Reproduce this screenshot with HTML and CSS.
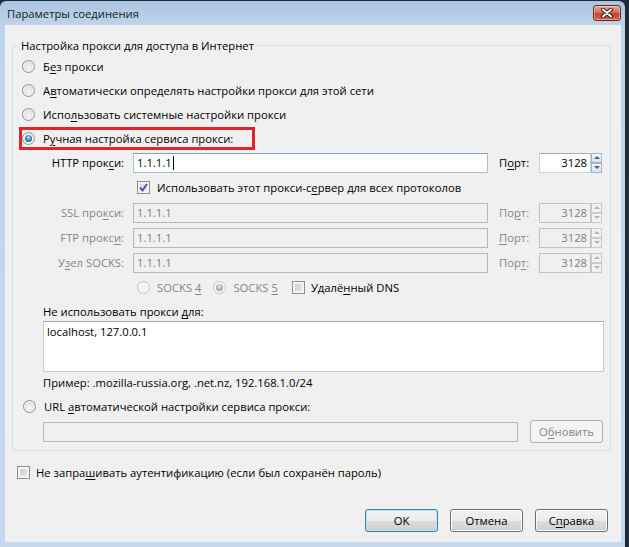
FILE: index.html
```html
<!DOCTYPE html>
<html>
<head>
  <title>Параметры соединения</title>
  <link rel="stylesheet" href="styles.css">
</head>
<body>
  <div class="window">
    <div class="titlebar">
      <span class="title">Параметры соединения</span>
      <span class="close">
        <svg width="14" height="10" viewBox="0 0 14 10">
          <path d="M3 1.5 L11 8.5 M11 1.5 L3 8.5" stroke="#3b1c16" stroke-width="4" stroke-linecap="round"/>
          <path d="M3 1.5 L11 8.5 M11 1.5 L3 8.5" stroke="#ffffff" stroke-width="2" stroke-linecap="round"/>
        </svg>
      </span>
    </div>

    <div class="client">
      <fieldset class="group">
        <legend>Настройка прокси для доступа в Интернет</legend>

        <div class="row"><span class="radio"></span><span>Б<u>е</u>з прокси</span></div>
        <div class="row"><span class="radio"></span><span>А<u>в</u>томатически определять настройки прокси для этой сети</span></div>
        <div class="row"><span class="radio"></span><span>Испо<u>л</u>ьзовать системные настройки прокси</span></div>
        <div class="row">
          <span class="highlight"><span class="radio checked"></span><span>Р<u>у</u>чная настройка сервиса прокси:</span></span>
        </div>

        <div class="proxy-grid">
          <label class="lbl">HTTP прок<u>с</u>и:</label>
          <div class="field"><span>1.1.1.1</span><span class="caret"></span></div>
          <label class="lbl-port">П<u>о</u>рт:</label>
          <div class="port">
            <div class="port-val">3128</div>
            <div class="spin"><span class="up"></span><span class="down"></span></div>
          </div>

          <div class="check-row">
            <span class="check checked">
              <svg width="9" height="9" viewBox="0 0 9 9"><path d="M1 4.5 L3.5 7.5 L8 1" fill="none" stroke="#3a55a0" stroke-width="1.8"/></svg>
            </span>
            <span>Использовать этот прокси-с<u>е</u>рвер для всех протоколов</span>
          </div>

          <label class="lbl off">SSL про<u>к</u>си:</label>
          <div class="field off">1.1.1.1</div>
          <label class="lbl-port off">По<u>р</u>т:</label>
          <div class="port off">
            <div class="port-val">3128</div>
            <div class="spin"><span class="up"></span><span class="down"></span></div>
          </div>

          <label class="lbl off">FTP прокс<u>и</u>:</label>
          <div class="field off">1.1.1.1</div>
          <label class="lbl-port off"><u>П</u>орт:</label>
          <div class="port off">
            <div class="port-val">3128</div>
            <div class="spin"><span class="up"></span><span class="down"></span></div>
          </div>

          <label class="lbl off">У<u>з</u>ел SOCKS:</label>
          <div class="field off">1.1.1.1</div>
          <label class="lbl-port off">Пор<u>т</u>:</label>
          <div class="port off">
            <div class="port-val">3128</div>
            <div class="spin"><span class="up"></span><span class="down"></span></div>
          </div>
        </div>

        <div class="socks-row">
          <span class="radio off"></span><span class="off socks4">SOCKS <u>4</u></span>
          <span class="radio off checked"></span><span class="off socks5">SOCKS <u>5</u></span>
          <span class="check"></span><span>Удалё<u>н</u>ный DNS</span>
        </div>

        <div class="label-row">Не использовать прокси <u>д</u>ля:</div>
        <div class="textarea">localhost, 127.0.0.1</div>
        <div class="hint">Пример: .mozilla-russia.org, .net.nz, 192.168.1.0/24</div>

        <div class="row url-radio"><span class="radio"></span><span>URL <u>а</u>втоматической настройки сервиса прокси:</span></div>
        <div class="url-row">
          <div class="field off url-field"></div>
          <div class="btn off">О<u>б</u>новить</div>
        </div>
      </fieldset>

      <div class="auth-row">
        <span class="check"></span>
        <span>Не запра<u>ш</u>ивать аутентификацию (если был сохранён пароль)</span>
      </div>

      <div class="buttons">
        <div class="btn default">OK</div>
        <div class="btn">Отмена</div>
        <div class="btn">С<u>п</u>равка</div>
      </div>
    </div>
  </div>
</body>
</html>
```

FILE: styles.css
```css
* {
  box-sizing: border-box;
}
body {
  margin: 0;
  width: 629px;
  height: 547px;
  overflow: hidden;
  background-color: #1c2a3a;
  font-family: "Open Sans", "Segoe UI", sans-serif;
  font-size: 11.25px;
  color: #000;
}
u {
  text-decoration-thickness: 1px;
  text-underline-offset: 2px;
}
.window {
  width: 625px;
  height: 546px;
  margin-top: 1px;
  display: flex;
  flex-direction: column;
  padding: 0 4px 5px 5px;
  border-radius: 6px 6px 0 0;
  background: linear-gradient(to bottom, #a9c3e1 0, #bfd4eb 24px, #c6d9ee 100%);
}
.titlebar {
  height: 24px;
  display: flex;
  justify-content: space-between;
  align-items: flex-start;
  padding: 4px 0 0 2px;
}
.title {
  line-height: 17px;
  font-size: 11.25px;
  color: #1b1b1b;
}
.close {
  width: 28px;
  height: 16px;
  display: flex;
  align-items: center;
  justify-content: center;
  border: 1px solid #6e2a20;
  border-radius: 3px;
  background: linear-gradient(to bottom, #e8a898 0, #d5715e 45%, #c5412b 55%, #cf6a4c 100%);
  box-shadow: inset 0 0 0 1px rgba(255,255,255,0.35);
}
.client {
  flex: 1;
  display: flex;
  flex-direction: column;
  background-color: #f0f0f0;
  padding: 12px 10px 10px 7px;
}

/* group box */
.group {
  margin: 0;
  width: 599px;
  border: 1px solid #d5dfe5;
  border-radius: 3px;
  padding: 0 6px 6px 9px;
}
.group legend {
  padding: 0 2px;
  margin-left: -3px;
  line-height: 17px;
}
.row {
  height: 24px;
  display: flex;
  align-items: center;
}
.highlight {
  display: flex;
  align-items: center;
  width: 236px;
  height: 23px;
  margin-left: -3px;
  border: 3px solid #e0232d;
}

/* radio and check */
.radio {
  flex: none;
  position: relative;
  width: 13px;
  height: 13px;
  margin-right: 8px;
  border-radius: 50%;
  border: 1px solid #8e8f8f;
  background: radial-gradient(circle at 50% 65%, #f6f6f6 0, #e3e3e3 55%, #cdcdcd 100%);
  box-shadow: inset 0 0 0 1px #f7f7f7;
}
.radio.checked::after {
  content: "";
  position: absolute;
  left: 2px;
  top: 2px;
  width: 7px;
  height: 7px;
  border-radius: 50%;
  background: radial-gradient(circle at 50% 35%, #b4dffc 0, #3b7fbb 55%, #17466f 100%);
}
.radio.off {
  border-color: #c4c4c4;
  background: #f4f4f4;
}
.radio.off.checked::after {
  background: radial-gradient(circle at 50% 35%, #e6e6e6 0, #a9a9a9 60%, #8c8c8c 100%);
}
.check {
  flex: none;
  width: 13px;
  height: 13px;
  display: flex;
  align-items: center;
  justify-content: center;
  border: 1px solid #8e8f8f;
  background: linear-gradient(135deg, #c3c8ce 0, #eeeeef 100%);
  box-shadow: inset 0 0 0 2px #f4f4f4;
}
.check.checked {
  background: linear-gradient(135deg, #cdd4dc 0, #f1f3f5 100%);
}

/* proxy fields */
.proxy-grid {
  display: grid;
  grid-template-columns: 103px 355px 35px 63px;
  grid-auto-rows: 25px;
  column-gap: 8px;
  align-items: center;
}
.lbl {
  text-align: right;
  padding-right: 1px;
}
.lbl-port {
  padding-left: 3px;
}
.off {
  color: #868686;
}
.field {
  height: 20px;
  display: flex;
  align-items: center;
  padding: 0 3px;
  background-color: #fff;
  border: 1px solid #a9bfd6;
  border-top-color: #7ea2c8;
}
.field.off {
  background-color: #f0f0f0;
  border-color: #b7b7b7;
  color: #7e7e7e;
}
.caret {
  width: 1px;
  height: 14px;
  margin-left: 1px;
  background-color: #000;
}
.port {
  display: flex;
  height: 20px;
}
.port-val {
  width: 52px;
  height: 20px;
  line-height: 18px;
  text-align: right;
  padding-right: 3px;
  background-color: #fff;
  border: 1px solid #c9d3dd;
  border-top-color: #abadb3;
}
.port.off .port-val {
  background-color: #f0f0f0;
  border-color: #c2c2c2;
  color: #7e7e7e;
}
.spin {
  width: 11px;
  display: flex;
  flex-direction: column;
}
.spin span {
  flex: 1;
  display: flex;
  align-items: center;
  justify-content: center;
  border: 1px solid #a6b4c6;
  background: linear-gradient(to bottom, #f4f7fb, #d8e2ee);
}
.spin .up::after {
  content: "";
  border-left: 3px solid transparent;
  border-right: 3px solid transparent;
  border-bottom: 3px solid #4c6388;
}
.spin .down::after {
  content: "";
  border-left: 3px solid transparent;
  border-right: 3px solid transparent;
  border-top: 3px solid #4c6388;
}
.port.off .spin span {
  border-color: #cacaca;
  background: #f2f2f2;
}
.port.off .spin .up::after {
  border-bottom-color: #b4b4b4;
}
.port.off .spin .down::after {
  border-top-color: #b4b4b4;
}
.check-row {
  grid-column: 2 / 5;
  display: flex;
  align-items: center;
  gap: 7px;
  padding-left: 4px;
}
.socks-row {
  height: 25px;
  display: flex;
  align-items: center;
  padding-left: 115px;
}
.socks-row .radio {
  margin-right: 7px;
}
.socks4 {
  margin-right: 12px;
}
.socks5 {
  margin-right: 14px;
}
.socks-row .check {
  margin-right: 6px;
}

/* exceptions */
.label-row {
  height: 21px;
  line-height: 16px;
  padding: 4px 0 0 21px;
}
.textarea {
  margin-left: 21px;
  width: 561px;
  height: 51px;
  padding: 2px 3px;
  line-height: 16px;
  background-color: #fff;
  border: 1px solid #c5cbd2;
  border-top-color: #abadb3;
}
.hint {
  height: 22px;
  line-height: 22px;
  padding-left: 21px;
}
.url-radio {
  height: 25px;
  padding-left: 1px;
}
.url-row {
  height: 25px;
  display: flex;
  align-items: center;
}
.url-field {
  width: 475px;
  margin-left: 21px;
  border-color: #c3c3c3;
}

/* buttons */
.btn {
  width: 73px;
  height: 23px;
  display: flex;
  align-items: center;
  justify-content: center;
  border: 1px solid #707070;
  border-radius: 3px;
  background: linear-gradient(to bottom, #f2f2f2 0, #ebebeb 50%, #dddddd 51%, #cfcfcf 100%);
  box-shadow: inset 0 0 0 1px #fbfbfb;
}
.btn.default {
  border-color: #3c7fb1;
  box-shadow: inset 0 0 0 1px #bfe2f7;
}
.btn.off {
  margin-left: 12px;
  border-color: #adb2b5;
  background: #f4f4f4;
  box-shadow: none;
  color: #868686;
}
.auth-row {
  height: 21px;
  margin-top: 11px;
  padding-left: 5px;
  display: flex;
  align-items: center;
  gap: 6px;
}
.buttons {
  margin-top: auto;
  margin-right: 3px;
  display: flex;
  justify-content: flex-end;
  gap: 12px;
}
```
